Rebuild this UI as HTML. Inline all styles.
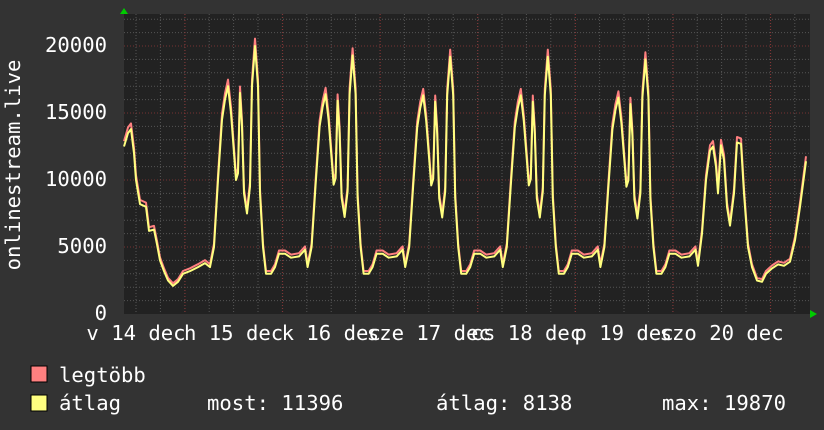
<!DOCTYPE html>
<html><head><meta charset="utf-8"><style>
body{margin:0;background:#333;width:824px;height:430px;overflow:hidden;font-family:"DejaVu Sans Mono","Liberation Mono",monospace;color:#fff}
svg{position:absolute;left:0;top:0}
</style></head><body>
<svg width="824" height="430" xmlns="http://www.w3.org/2000/svg" id="s" font-family="DejaVu Sans Mono, Liberation Mono, monospace" font-size="20.6" fill="#fff">
<rect x="124" y="14" width="686" height="300" fill="#222"/>
<g id="grid"></g>
<g id="lines"></g>
<polygon points="120,14 128,14 124,8" fill="#0c0"/>
<polygon points="810,310 810,318 817,314" fill="#0c0"/>
<g text-anchor="end">
<text x="107" y="52">20000</text>
<text x="107" y="119">15000</text>
<text x="107" y="186">10000</text>
<text x="107" y="253">5000</text>
<text x="107" y="320">0</text>
</g>
<text transform="translate(20,165) rotate(-90)" text-anchor="middle">onlinestream.live</text>
<g id="xl" text-anchor="middle"></g>
<rect x="31" y="366" width="16" height="16" fill="#ff8080" stroke="#000" stroke-width="1"/>
<rect x="31" y="395" width="16" height="16" fill="#ffff80" stroke="#000" stroke-width="1"/>
<text x="59" y="382">legtöbb</text>
<text x="59" y="410">átlag</text>
<text x="207" y="410">most: 11396</text>
<text x="436" y="410">átlag: 8138</text>
<text x="662" y="410">max: 19870</text>
</svg>
<script>
var NS="http://www.w3.org/2000/svg";
function el(t,a,p){var e=document.createElementNS(NS,t);for(var k in a)e.setAttribute(k,a[k]);document.getElementById(p).appendChild(e);return e;}
var D=97.6;
for(var x=136;x<810;x+=D/4){el("line",{x1:x,y1:14,x2:x,y2:314,stroke:"#555","stroke-dasharray":"1,2","stroke-width":1},"grid");}
for(var v=1000;v<=22000;v+=1000){var y=314-v*0.0134;el("line",{x1:124,y1:y,x2:810,y2:y,stroke:(v%5000==0)?"#733":"#555","stroke-dasharray":"1,2","stroke-width":1},"grid");}
for(var i=0;i<7;i++){var x=185+D*i;el("line",{x1:x,y1:14,x2:x,y2:314,stroke:"#833","stroke-dasharray":"1,2"},"grid");}
var labs=["v 14 dec","h 15 dec","k 16 dec","sze 17 dec","cs 18 dec","p 19 dec","szo 20 dec"];
for(var i=0;i<7;i++){var t=el("text",{x:136+D*i,y:340},"xl");t.textContent=labs[i];}
var prof=[[-45,3500],[-41,5000],[-37,10000],[-33,14500],[-30,16000],[-27,17000],[-24,15000],[-21,12000],[-19,10000],[-17,10500],[-15,16500],[-13,14000],[-11,9000],[-8,7500],[-5,9500],[-3,17000],[0,20000],[3,17000],[5,9000],[8,5000],[11,3000],[16,3000],[20,3500],[24,4500],[30,4500],[36,4200],[44,4300],[50,4800]];
var pk=[1,0.965,0.96,0.96,0.95];
var pts=[[124,12500],[128,13500],[131,13800],[134,12000],[136,10000],[140,8200],[146,8000],[149,6200],[154,6300],[157,5200],[160,4000],[164,3200],[168,2500],[173,2100],[178,2400],[183,3000],[190,3200],[198,3500],[205,3800]];
for(var d=0;d<5;d++){var P=255+D*d;prof.forEach(function(p){var v=p[1];if(v>6000)v=v*pk[d];pts.push([P+p[0],v]);});}
pts.push([698,3600],[702,6000],[706,10000],[710,12200],[713,12500],[716,11000],[718,9000],[721,12600],[724,11500],[727,8000],[730,6600],[734,9000],[737,12800],[741,12700],[744,9000],[748,5000],[752,3500],[757,2500],[762,2400],[766,3000],[772,3400],[778,3700],[784,3600],[790,3900],[795,5500],[800,8000],[806,11400]);
function poly(off,mul,col){var s=pts.map(function(p){return p[0].toFixed(1)+","+(314-(p[1]*mul+off)*0.0134).toFixed(1);}).join(" ");el("polyline",{points:s,fill:"none",stroke:col,"stroke-width":2,"stroke-linejoin":"round"},"lines");}
poly(150,1.02,"#ff8080");
poly(0,1,"#ffff80");
</script>
</body></html>
